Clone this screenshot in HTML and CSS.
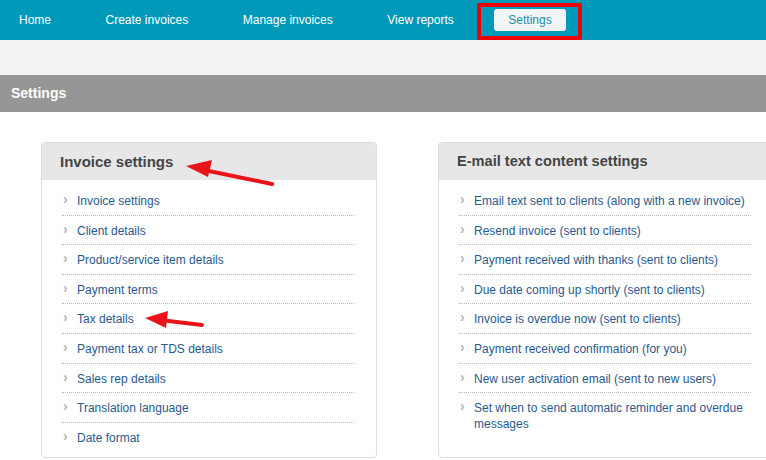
FILE: index.html
```html
<!DOCTYPE html>
<html lang="en">
<head>
    <meta charset="UTF-8">
    <title>Settings</title>
    <link rel="stylesheet" href="styles.css">
</head>
<body>

<div class="page">
    <div class="topnav">
        <a href="#">Home</a>
        <a href="#">Create invoices</a>
        <a href="#">Manage invoices</a>
        <a href="#">View reports</a>
        <a href="#" class="active">Settings</a>
    </div>
    <div class="subbar"></div>
    <div class="title-bar">Settings</div>

    <div class="content">
        <div class="box box-left">
            <h2>Invoice settings</h2>
            <ul>
                <li><a href="#">Invoice settings</a></li>
                <li><a href="#">Client details</a></li>
                <li><a href="#">Product/service item details</a></li>
                <li><a href="#">Payment terms</a></li>
                <li><a href="#">Tax details</a></li>
                <li><a href="#">Payment tax or TDS details</a></li>
                <li><a href="#">Sales rep details</a></li>
                <li><a href="#">Translation language</a></li>
                <li><a href="#">Date format</a></li>
            </ul>
        </div>
        <div class="box box-right">
            <h2>E-mail text content settings</h2>
            <ul>
                <li><a href="#">Email text sent to clients (along with a new invoice)</a></li>
                <li><a href="#">Resend invoice (sent to clients)</a></li>
                <li><a href="#">Payment received with thanks (sent to clients)</a></li>
                <li><a href="#">Due date coming up shortly (sent to clients)</a></li>
                <li><a href="#">Invoice is overdue now (sent to clients)</a></li>
                <li><a href="#">Payment received confirmation (for you)</a></li>
                <li><a href="#">New user activation email (sent to new users)</a></li>
                <li><a href="#">Set when to send automatic reminder and overdue messages</a></li>
            </ul>
        </div>
    </div>

    <!-- Markierungen aus dem Screenshot -->
    <div class="mark-box"></div>
    <svg class="marks" viewBox="0 0 766 460" xmlns="http://www.w3.org/2000/svg">
        <line x1="272" y1="184" x2="204" y2="170" stroke="#e8141a" stroke-width="4" stroke-linecap="round"/>
        <polygon points="186,166 212,160 208,177" fill="#e8141a"/>
        <line x1="202" y1="325" x2="160" y2="320" stroke="#e8141a" stroke-width="4" stroke-linecap="round"/>
        <polygon points="145,318 168,311 166,328" fill="#e8141a"/>
    </svg>
</div>

</body>
</html>
```

FILE: styles.css
```css
body {
    margin: 0;
    font-family: "Liberation Sans", Arial, sans-serif;
    background: #fff;
    overflow: hidden;
}
.page {
    position: relative;
    width: 766px;
    height: 460px;
    overflow: hidden;
}
.topnav {
    height: 40px;
    background: #0099b9;
    display: flex;
    align-items: center;
    gap: 26.5px;
    padding-left: 5px;
}
.topnav a {
    color: #fff;
    text-decoration: none;
    font-size: 12px;
    padding: 0 14px;
    line-height: 22px;
    border-radius: 3px;
}
.topnav a.active {
    background: #f2f6f7;
    color: #1b8dad;
}
.subbar {
    height: 35px;
    background: #f3f3f3;
}
.title-bar {
    height: 37px;
    line-height: 37px;
    background: #969696;
    color: #fff;
    font-weight: bold;
    font-size: 14px;
    padding-left: 11px;
}
.content {
    display: flex;
    gap: 61px;
    padding: 30px 0 0 41px;
}
.box {
    flex: none;
    width: 334px;
    border: 1px solid #dcdcdc;
    border-radius: 4px;
    background: #fff;
}
.box h2 {
    margin: 0;
    height: 37px;
    line-height: 37px;
    background: #e8e7e8;
    color: #444;
    font-size: 15px;
    font-weight: bold;
    padding-left: 18px;
    border-radius: 4px 4px 0 0;
}
.box-right h2 {
    font-size: 14.6px;
}
.box ul {
    list-style: none;
    margin: 0 22px 0 20px;
    padding: 6px 0 6px;
}
.box li {
    position: relative;
    padding: 7px 0 5.6px 15px;
    line-height: 16px;
    font-size: 12px;
    border-bottom: 1px dotted #b8b8b8;
}
.box li:last-child {
    border-bottom: none;
}
.box li::before {
    content: "\203A";
    position: absolute;
    left: 1px;
    top: 5px;
    color: #b8b8b8;
    font-weight: bold;
    font-size: 14px;
}
.box li a {
    color: #285a8e;
    text-decoration: none;
}
.mark-box {
    position: absolute;
    left: 477px;
    top: 3px;
    width: 97px;
    height: 29px;
    border: 4px solid #ee0000;
    border-radius: 2px;
}
.marks {
    position: absolute;
    left: 0;
    top: 0;
    width: 766px;
    height: 460px;
    pointer-events: none;
}
```
